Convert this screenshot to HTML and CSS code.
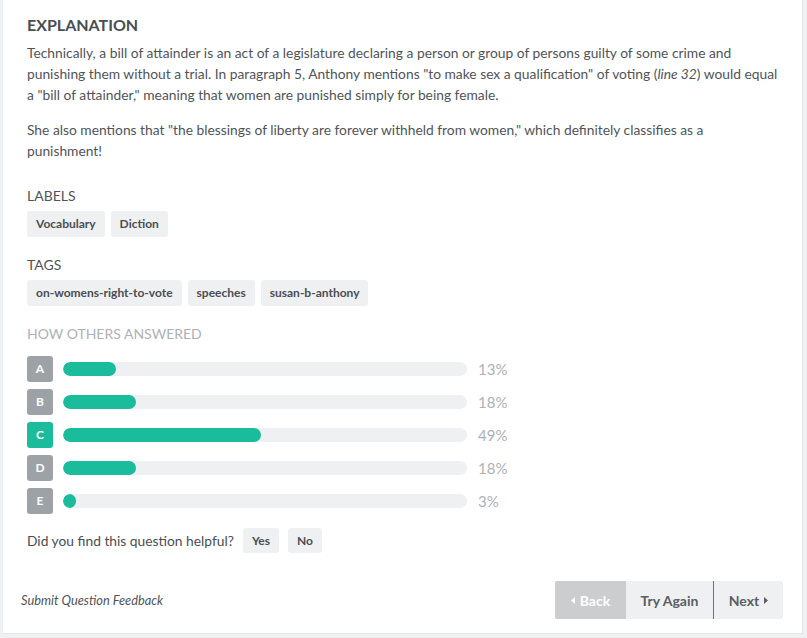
FILE: index.html
```html
<!DOCTYPE html>
<html lang="en">
<head>
<meta charset="utf-8">
<title>Explanation</title>
<link rel="stylesheet" href="styles.css">
</head>
<body>
<div class="card">
  <div class="content">
    <h2 class="heading">EXPLANATION</h2>
    <p class="para">Technically, a bill of attainder is an act of a legislature declaring a person or group of persons guilty of some crime and punishing them without a trial. In paragraph 5, Anthony mentions "to make sex a qualification" of voting (<em>line 32</em>) would equal a "bill of attainder," meaning that women are punished simply for being female.</p>
    <p class="para para-2">She also mentions that "the blessings of liberty are forever withheld from women," which definitely classifies as a punishment!</p>

    <div class="section-title">LABELS</div>
    <div class="pills">
      <span class="pill">Vocabulary</span>
      <span class="pill">Diction</span>
    </div>

    <div class="section-title">TAGS</div>
    <div class="pills">
      <span class="pill">on-womens-right-to-vote</span>
      <span class="pill">speeches</span>
      <span class="pill">susan-b-anthony</span>
    </div>

    <div class="section-title muted">HOW OTHERS ANSWERED</div>
    <div class="answers">
      <div class="answer">
        <span class="letter">A</span>
        <div class="track"><div class="fill" style="width:13%"></div></div>
        <span class="pct">13%</span>
      </div>
      <div class="answer">
        <span class="letter">B</span>
        <div class="track"><div class="fill" style="width:18%"></div></div>
        <span class="pct">18%</span>
      </div>
      <div class="answer">
        <span class="letter correct">C</span>
        <div class="track"><div class="fill" style="width:49%"></div></div>
        <span class="pct">49%</span>
      </div>
      <div class="answer">
        <span class="letter">D</span>
        <div class="track"><div class="fill" style="width:18%"></div></div>
        <span class="pct">18%</span>
      </div>
      <div class="answer">
        <span class="letter">E</span>
        <div class="track"><div class="fill" style="width:3%"></div></div>
        <span class="pct">3%</span>
      </div>
    </div>

    <div class="helpful">
      <span class="helpful-text">Did you find this question helpful?</span>
      <button class="small-btn">Yes</button>
      <button class="small-btn">No</button>
    </div>
  </div>

  <div class="footer">
    <span class="feedback">Submit Question Feedback</span>
    <div class="nav">
      <button class="nav-btn back"><svg class="caret" width="4" height="7" viewBox="0 0 4 7"><path d="M4 0 L0 3.5 L4 7 Z" fill="currentColor"/></svg>Back</button>
      <button class="nav-btn try">Try Again</button>
      <button class="nav-btn next">Next<svg class="caret caret-r" width="4" height="7" viewBox="0 0 4 7"><path d="M0 0 L4 3.5 L0 7 Z" fill="currentColor"/></svg></button>
    </div>
  </div>
</div>
</body>
</html>
```

FILE: styles.css
```css
html, body {
  margin: 0;
  padding: 0;
}
body {
  background: #eff0f1;
  font-family: Lato, "Open Sans", Arial, sans-serif;
  color: #505458;
  width: 807px;
  height: 638px;
  overflow: hidden;
}
.card {
  margin-left: 3px;
  width: 799px;
  height: 633px;
  background: #ffffff;
  border-right: 1px solid #e4e6e8;
  border-bottom: 1px solid #e4e6e8;
  display: flex;
  flex-direction: column;
}
.content {
  padding: 13px 22px 0 24px;
}
.heading {
  margin: 0 0 5px 0;
  font-size: 16px;
  line-height: 24px;
  font-weight: 700;
  color: #4a4e52;
}
.para {
  margin: 0;
  font-size: 13.8px;
  line-height: 21px;
  color: #505458;
}
.para em {
  font-style: italic;
}
.para-2 {
  margin-top: 14px;
}
.section-title {
  margin-top: 25px;
  font-size: 14px;
  line-height: 20px;
  color: #505458;
}
.pills + .section-title {
  margin-top: 18px;
}
.section-title.muted {
  color: #aeb1b5;
}
.pills {
  margin-top: 5px;
  display: flex;
  gap: 6px;
}
.pill {
  display: inline-block;
  height: 26px;
  line-height: 26px;
  padding: 0 9px;
  background: #eff0f1;
  border-radius: 3px;
  font-size: 12px;
  font-weight: 700;
  color: #4a4e52;
}
.answers {
  margin-top: 12px;
  display: flex;
  flex-direction: column;
  gap: 7px;
}
.answer {
  display: flex;
  align-items: center;
  height: 26px;
}
.letter {
  width: 26px;
  height: 26px;
  line-height: 26px;
  text-align: center;
  border-radius: 3px;
  background: #9da2a6;
  color: #ffffff;
  font-size: 12px;
  font-weight: 700;
}
.letter.correct {
  background: #1abc9c;
}
.track {
  margin-left: 10px;
  width: 404px;
  height: 14px;
  border-radius: 7px;
  background: #eff0f1;
  overflow: hidden;
}
.fill {
  height: 14px;
  min-width: 13px;
  border-radius: 7px;
  background: #1abc9c;
}
.pct {
  margin-left: 11px;
  font-size: 15px;
  color: #aeb1b5;
}
.helpful {
  margin-top: 14px;
  display: flex;
  align-items: center;
  gap: 9px;
}
.helpful-text {
  font-size: 13.8px;
  color: #4a4e52;
}
.small-btn {
  height: 25px;
  padding: 0 9px;
  border: none;
  border-radius: 3px;
  background: #eff0f1;
  font-family: inherit;
  font-size: 12px;
  font-weight: 700;
  color: #4a4e52;
}
.footer {
  margin-top: auto;
  padding: 0 19px 14px 18px;
  display: flex;
  align-items: center;
  justify-content: space-between;
}
.feedback {
  font-size: 12.8px;
  font-style: italic;
  color: #505458;
}
.nav {
  display: flex;
}
.nav-btn {
  height: 38px;
  border: none;
  margin: 0;
  background: #eff0f1;
  font-family: inherit;
  font-size: 14px;
  font-weight: 700;
  color: #5a5e62;
  display: flex;
  align-items: center;
  justify-content: center;
}
.nav-btn.back {
  width: 71px;
  background: #cbcdcf;
  color: #ffffff;
  border-radius: 2px 0 0 2px;
}
.nav-btn.try {
  width: 88px;
  border-right: 1px solid #6c7074;
}
.nav-btn.next {
  width: 69px;
  border-radius: 0 2px 2px 0;
}
.caret {
  margin-right: 5px;
}
.caret-r {
  margin-right: 0;
  margin-left: 5px;
}
```
